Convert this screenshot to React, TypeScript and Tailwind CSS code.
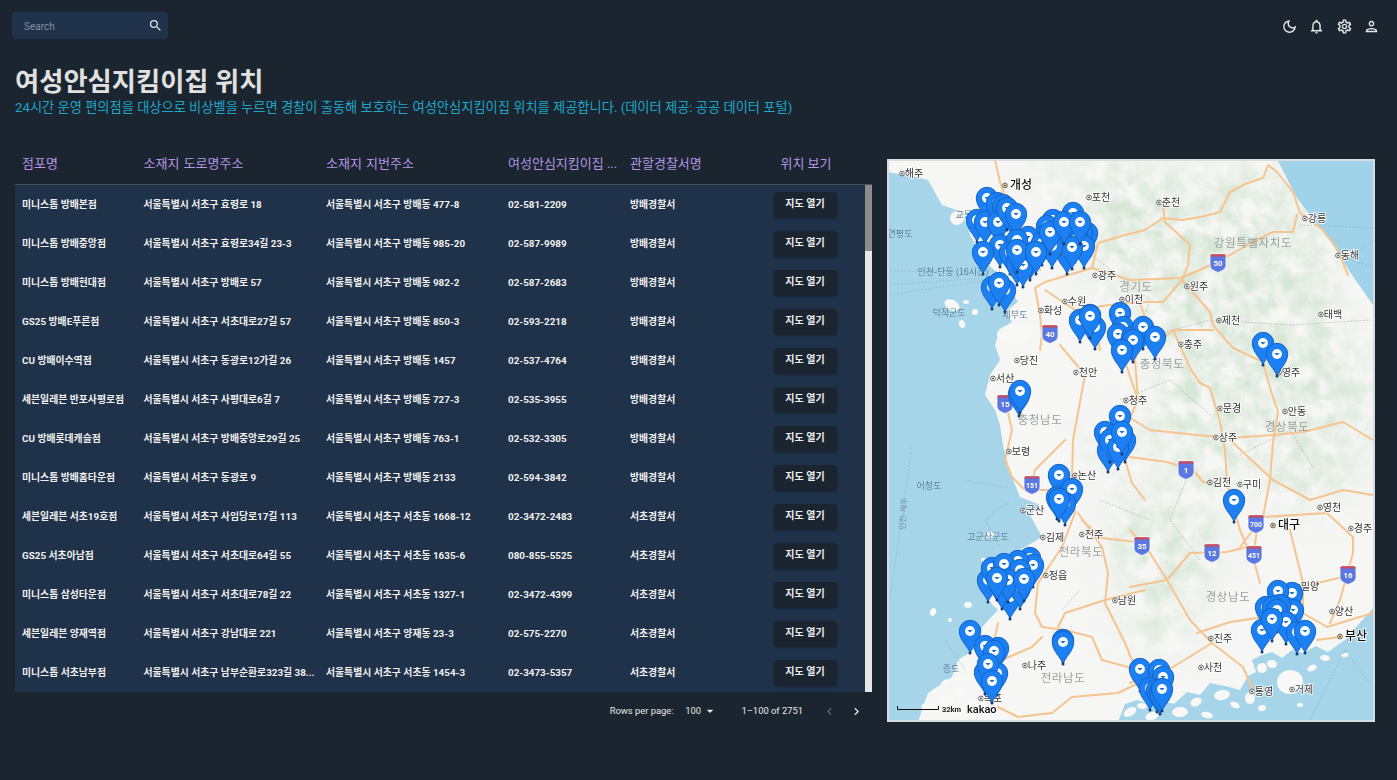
import React from "react";
import {
  MdSearch,
  MdOutlineDarkMode,
  MdOutlineNotifications,
  MdOutlineSettings,
  MdOutlinePerson,
  MdChevronLeft,
  MdChevronRight,
  MdArrowDropDown,
} from "react-icons/md";

const rows = [
  ["미니스톱 방배본점", "서울특별시 서초구 효령로 18", "서울특별시 서초구 방배동 477-8", "02-581-2209", "방배경찰서"],
  ["미니스톱 방배중앙점", "서울특별시 서초구 효령로34길 23-3", "서울특별시 서초구 방배동 985-20", "02-587-9989", "방배경찰서"],
  ["미니스톱 방배현대점", "서울특별시 서초구 방배로 57", "서울특별시 서초구 방배동 982-2", "02-587-2683", "방배경찰서"],
  ["GS25 방배E푸른점", "서울특별시 서초구 서초대로27길 57", "서울특별시 서초구 방배동 850-3", "02-593-2218", "방배경찰서"],
  ["CU 방배이수역점", "서울특별시 서초구 동광로12가길 26", "서울특별시 서초구 방배동 1457", "02-537-4764", "방배경찰서"],
  ["세븐일레븐 반포사평로점", "서울특별시 서초구 사평대로6길 7", "서울특별시 서초구 방배동 727-3", "02-535-3955", "방배경찰서"],
  ["CU 방배롯데캐슬점", "서울특별시 서초구 방배중앙로29길 25", "서울특별시 서초구 방배동 763-1", "02-532-3305", "방배경찰서"],
  ["미니스톱 방배홈타운점", "서울특별시 서초구 동광로 9", "서울특별시 서초구 방배동 2133", "02-594-3842", "방배경찰서"],
  ["세븐일레븐 서초19호점", "서울특별시 서초구 사임당로17길 113", "서울특별시 서초구 서초동 1668-12", "02-3472-2483", "서초경찰서"],
  ["GS25 서초아남점", "서울특별시 서초구 서초대로64길 55", "서울특별시 서초구 서초동 1635-6", "080-855-5525", "서초경찰서"],
  ["미니스톱 삼성타운점", "서울특별시 서초구 서초대로78길 22", "서울특별시 서초구 서초동 1327-1", "02-3472-4399", "서초경찰서"],
  ["세븐일레븐 양재역점", "서울특별시 서초구 강남대로 221", "서울특별시 서초구 양재동 23-3", "02-575-2270", "서초경찰서"],
  ["미니스톱 서초남부점", "서울특별시 서초구 남부순환로323길 38...", "서울특별시 서초구 서초동 1454-3", "02-3473-5357", "서초경찰서"],
];

const roads = [
  "995,160 1000,182 1008,205 1040,270",
  "1045,282 1035,288 1040,315 1042,335 1040,350",
  "1092,268 1098,243 1125,235 1145,230 1163,218 1183,220 1205,216 1220,212 1230,192 1245,184 1263,178 1268,165 1277,172 1293,192 1300,213 1323,230 1337,248 1348,275",
  "1163,205 1165,222 1190,245 1188,265 1182,280 1210,312 1213,325 1233,348 1263,362 1270,388 1278,412 1273,442 1270,480 1263,517 1240,547",
  "1130,280 1180,278 1200,270 1230,255 1247,245 1273,232 1293,232 1297,215",
  "1155,345 1173,330 1213,330",
  "1173,330 1190,368 1200,383 1210,388 1220,422 1225,450",
  "1130,418 1150,430 1197,435 1230,438 1273,435 1303,432 1343,422 1373,440",
  "1143,302 1163,302 1182,280",
  "1140,302 1145,318",
  "1045,282 1092,268 1130,280",
  "1045,290 1075,310 1110,305 1140,302",
  "1005,460 1012,477 1025,490 1048,490",
  "1065,440 1035,470 1030,492",
  "1073,440 1072,480 1075,513 1062,547 1038,583 1035,613 1042,627 1065,630 1092,637 1102,660 1128,667 1145,683",
  "1078,513 1102,547 1108,573 1105,603 1125,643 1132,660",
  "1145,590 1105,600 1065,613 1058,627",
  "998,623 995,637",
  "1002,660 1032,647 1042,637",
  "998,707 1018,717 1052,713 1072,697 1118,693 1145,680",
  "1082,520 1102,538 1145,543",
  "1125,460 1132,483 1145,500",
  "1130,457 1167,462 1193,470 1203,482 1227,483 1225,450",
  "1227,483 1240,530 1247,547 1227,552 1190,553 1167,580 1150,553 1130,530",
  "1167,580 1130,587",
  "1167,580 1190,620 1212,643 1243,667 1253,690",
  "1212,643 1173,667 1130,683",
  "1197,633 1230,622 1257,618 1300,620",
  "1257,530 1253,557 1260,583",
  "1230,440 1273,480 1310,500 1343,490 1373,495",
  "1263,517 1327,513 1353,537 1353,553 1340,600 1330,623",
  "1290,530 1303,583 1303,613 1327,627 1373,613",
  "1300,587 1343,577",
  "1317,640 1340,637",
  "1005,400 1012,430 1005,460",
  "1060,345 1085,375 1073,440",
  "1118,340 1138,400 1130,418",
  "1145,318 1135,360 1138,400",
  "1100,350 1095,327",
];

const regions: [string, number, number][] = [
  ["강원특별자치도", 1253, 247],
  ["경기도", 1136, 291],
  ["충청북도", 1162, 368],
  ["충청남도", 1040, 424],
  ["경상북도", 1287, 431],
  ["전라북도", 1081, 556],
  ["전라남도", 1063, 682],
  ["경상남도", 1228, 601],
];

const cities: [string, number, number, boolean?][] = [
  ["해주", 914, 177],
  ["개성", 1021, 189, true],
  ["포천", 1101, 201],
  ["춘천", 1171, 206],
  ["강릉", 1317, 222],
  ["동해", 1350, 259],
  ["원주", 1199, 290],
  ["제천", 1231, 324],
  ["이천", 1134, 303],
  ["수원", 1077, 305],
  ["화성", 1053, 314],
  ["광주", 1107, 279],
  ["태백", 1333, 318],
  ["충주", 1193, 348],
  ["영주", 1291, 376],
  ["문경", 1232, 412],
  ["안동", 1297, 415],
  ["청주", 1138, 404],
  ["상주", 1228, 441],
  ["천안", 1088, 376],
  ["당진", 1029, 364],
  ["서산", 1005, 382],
  ["보령", 1021, 455],
  ["논산", 1087, 479],
  ["군산", 1035, 514],
  ["김제", 1055, 541],
  ["전주", 1094, 538],
  ["정읍", 1058, 579],
  ["남원", 1127, 604],
  ["나주", 1037, 669],
  ["목포", 993, 702],
  ["김천", 1222, 486],
  ["구미", 1252, 488],
  ["대구", 1289, 529, true],
  ["영천", 1332, 511],
  ["경주", 1363, 532],
  ["밀양", 1310, 590],
  ["양산", 1344, 615],
  ["부산", 1356, 640, true],
  ["진주", 1223, 642],
  ["사천", 1213, 671],
  ["통영", 1264, 695],
  ["거제", 1304, 693],
];

const seaLabels: [string, number, number][] = [
  ["연평도", 900, 237],
  ["교동도", 968, 218],
  ["덕적군도", 949, 316],
  ["제부도", 1015, 318],
  ["인천-단둥 (16시간)", 953, 275],
  ["어청도", 929, 489],
  ["고군산군도", 988, 540],
  ["증도", 951, 672],
];

const shields: [string, number, number][] = [
  ["50", 1218, 262],
  ["40", 1050, 333],
  ["15", 1005, 403],
  ["151", 1032, 484],
  ["1", 1186, 469],
  ["35", 1142, 545],
  ["12", 1212, 552],
  ["451", 1254, 554],
  ["700", 1256, 523],
  ["16", 1348, 574],
];

const islands: [number, number, number, number][] = [
  [1130, 712, 7, 4], [1142, 706, 5, 3], [1152, 716, 7, 4], [1170, 700, 6, 3], [1180, 712, 8, 5], [1196, 702, 6, 4], [1207, 715, 6, 3],
  [1222, 695, 8, 5], [1235, 705, 5, 3], [1250, 698, 5, 6], [1262, 708, 4, 3], [1272, 664, 5, 4], [1290, 682, 13, 12], [1312, 668, 5, 3],
  [1325, 658, 5, 3], [1345, 655, 4, 2], [1262, 668, 5, 5], [1300, 705, 3, 2], [1240, 680, 4, 3],
  [930, 708, 9, 5], [945, 700, 9, 6], [960, 692, 8, 6], [975, 705, 14, 8], [958, 712, 8, 5], [972, 668, 6, 7], [962, 680, 5, 3],
  [945, 682, 4, 2], [936, 692, 4, 3], [985, 688, 4, 3], [933, 612, 3, 4], [968, 605, 4, 3], [950, 620, 2, 2],
  [984, 250, 7, 6], [957, 218, 7, 7], [952, 305, 8, 5], [966, 302, 3, 2], [962, 324, 3, 4], [975, 312, 3, 3], [1015, 334, 18, 10], [990, 535, 4, 3],
  [985, 560, 4, 2],
];

const pins: [number, number][] = [
  [987, 198], [997, 203], [1003, 205], [977, 220], [985, 222], [998, 222], [1011, 212], [1007, 208], [1016, 214],
  [1073, 213], [1053, 220], [1047, 226], [1087, 233], [1082, 232], [1077, 230], [1068, 232], [1043, 237], [1028, 237],
  [1000, 245], [1017, 240], [1010, 252], [1030, 258], [1042, 243], [1067, 252], [1075, 240], [1084, 246], [1060, 232], [1072, 247], [1052, 246],
  [983, 252], [1017, 263], [1023, 265], [1017, 250], [1036, 252], [1050, 232], [1064, 222], [1080, 222],
  [992, 287], [1005, 290], [999, 283],
  [1090, 315], [1080, 320], [1095, 327], [1090, 316],
  [1120, 313], [1123, 327], [1118, 334], [1132, 337], [1143, 327], [1133, 340], [1122, 350], [1155, 337],
  [1263, 343], [1277, 354],
  [1019, 394], [1020, 391],
  [1120, 416], [1105, 432], [1108, 450], [1115, 435], [1125, 440], [1110, 440], [1118, 447], [1122, 432],
  [1059, 475], [1072, 489], [1065, 503], [1057, 497], [1059, 499],
  [1010, 597], [1002, 587], [1020, 587], [988, 580], [992, 568], [1030, 558], [1033, 565], [1018, 561], [1004, 564], [1020, 570], [1008, 580], [997, 578], [1024, 579],
  [970, 631], [998, 648], [985, 646], [994, 651], [997, 673], [985, 672], [988, 664], [992, 681],
  [1063, 640], [1063, 642],
  [1140, 669], [1159, 670], [1163, 677], [1150, 688], [1157, 690], [1160, 692], [1162, 689],
  [1234, 500],
  [1292, 593], [1278, 591], [1293, 610], [1280, 605], [1262, 630], [1266, 607], [1273, 607], [1277, 610], [1286, 622], [1297, 632], [1272, 619], [1305, 631],
];

function MapView() {
  return (
    <svg viewBox="887 159 488 563" width="488" height="563" className="block h-full w-full">
      <defs>
        <filter id="noise" x="0" y="0" width="100%" height="100%">
          <feTurbulence type="fractalNoise" baseFrequency="0.055" numOctaves="4" seed="7" />
          <feColorMatrix
            type="matrix"
            values="0 0 0 0 0.66  0 0 0 0 0.79  0 0 0 0 0.66  1.6 1.6 0 0 -1.15"
          />
        </filter>
        <filter id="soft">
          <feGaussianBlur stdDeviation="22" />
        </filter>
        <filter id="tiny">
          <feGaussianBlur stdDeviation="0.3" />
        </filter>
        <mask id="mountains">
          <g filter="url(#soft)" fill="#fff">
            <ellipse cx="1240" cy="290" rx="95" ry="120" />
            <ellipse cx="1150" cy="240" rx="70" ry="70" />
            <ellipse cx="1110" cy="450" rx="20" ry="20" />
            <ellipse cx="1210" cy="420" rx="60" ry="60" />
            <ellipse cx="1330" cy="400" rx="40" ry="70" />
            <ellipse cx="1165" cy="540" rx="55" ry="55" />
            <ellipse cx="1310" cy="470" rx="50" ry="30" />
            <ellipse cx="1090" cy="175" rx="50" ry="20" />
            <ellipse cx="1160" cy="620" rx="30" ry="30" />
          </g>
        </mask>
        <symbol id="pin" overflow="visible">
          <path
            d="M0 22C-2 15-10.7 9.5-10.7 0A10.7 10.7 0 1 1 10.7 0C10.7 9.5 2 15 0 22Z"
            fill="#1a7ff2"
            stroke="#1564c8"
            strokeWidth="1"
          />
          <circle cx="0" cy="0" r="4.9" fill="#fff" />
          <path d="M-2.7-1H2.7L0 1.4Z" fill="#1a70d8" />
          <circle cx="0" cy="22" r="1.5" fill="#133a70" />
        </symbol>
      </defs>

      <g filter="url(#tiny)">
        <rect x="887" y="159" width="488" height="563" fill="#f6f6f4" />
        <rect x="887" y="159" width="488" height="563" filter="url(#noise)" mask="url(#mountains)" />

        <path
          d="M887 172 912 176 928 180 942 205 962 212 970 235 985 262 1003 278 1012 292 1018 302 1005 312 1012 322 1000 330 995 345 1000 360 990 375 985 395 995 410 1000 425 1003 445 1008 465 1015 485 1020 497 1040 505 1030 515 1042 537 1015 553 998 567 985 597 998 610 982 627 978 647 958 660 952 677 928 693 918 722 887 722Z"
          fill="#a6d5ea"
        />
        <path d="M1277 159 1297 198 1310 215 1333 245 1350 272 1373 305 1375 159Z" fill="#a0d2ea" />
        <path
          d="M1118 722 1125 704 1137 700 1150 704 1165 697 1175 703 1187 692 1200 695 1210 683 1225 686 1240 690 1248 676 1256 672 1252 660 1262 655 1272 652 1282 658 1292 650 1303 653 1316 646 1328 652 1345 640 1358 625 1375 606 1375 722Z"
          fill="#a6d5ea"
        />
        <g fill="#f8f8f6">
          {islands.map(([x, y, a, b], i) => (
            <ellipse key={i} cx={x} cy={y} rx={a} ry={b} transform={`rotate(${(i * 37) % 60 - 30} ${x} ${y})`} />
          ))}
        </g>

        <path d="M887 271H1000M887 285 985 278M887 295 990 280" stroke="#7fa9bd" strokeWidth="0.6" strokeDasharray="1.5 2" fill="none" />
        <path d="M912 445 890 600M965 480 1010 488M1000 545 985 520 1010 500M945 640 965 670M1300 225 1375 228M1345 258 1375 268M1345 260 1375 240M1310 720 1345 650 1375 690" stroke="#7fa9bd" strokeWidth="0.6" strokeDasharray="1.5 2" fill="none" />

        <path d="M1190 470 1170 520 1200 560M1085 250 1150 300 1135 340 1210 320 1290 325 1370 320M1120 400 1170 380 1210 415M1240 455 1290 430 1315 470M1100 500 1150 520M1062 610 1080 590" stroke="#a9b0a5" strokeWidth="0.6" strokeDasharray="2 1.2" fill="none" />

        <g fill="none" stroke="#f6c48f" strokeWidth="2" strokeLinejoin="round" strokeLinecap="round">
          {roads.map((r, i) => (
            <polyline key={i} points={r} />
          ))}
        </g>

        {shields.map(([t, x, y]) => (
          <g key={t} transform={`translate(${x} ${y})`}>
            <path d="M-8-6C-8-7-7-8-6-8H6C7-8 8-7 8-6V3C8 8 3 9 0 10.5-3 9-8 8-8 3Z" fill="#5a78e0" stroke="#fff" strokeWidth="0.8" />
            <path d="M-7.6-5.6C-7.6-7-7-7.7-6-7.7H6C7-7.7 7.6-7 7.6-5.6Z" fill="#cf4b57" />
            <text x="0" y="4" textAnchor="middle" fontSize={t.length > 2 ? 7 : 8} fontWeight="700" fill="#fff" fontFamily="Roboto, sans-serif">
              {t}
            </text>
          </g>
        ))}

        <g fontFamily="'Noto Sans CJK KR', sans-serif">
          {regions.map(([t, x, y]) => (
            <text key={t} x={x} y={y} textAnchor="middle" fontSize="11.5" fill="#9a9f9c" letterSpacing="0.6">
              {t}
            </text>
          ))}
          {seaLabels.map(([t, x, y]) => (
            <text key={t} x={x} y={y} textAnchor="middle" fontSize="9" fill="#5e7f91">
              {t}
            </text>
          ))}
          <text transform="translate(905 530) rotate(-86)" fontSize="8" fill="#6f93a5">
            인천-제주
          </text>
          {cities.map(([t, x, y, big]) => (
            <g key={t}>
              <circle cx={x - (big ? 16 : 12)} cy={y - 3.5} r="2.4" fill={big ? "#f6e7a8" : "#fff"} stroke="#444" strokeWidth="0.8" />
              <circle cx={x - (big ? 16 : 12)} cy={y - 3.5} r="0.9" fill="#444" />
              <text
                x={x}
                y={y}
                textAnchor="middle"
                fontSize={big ? 12 : 10}
                fill={big ? "#111" : "#333"}
                fontWeight={big ? 500 : 400}
                stroke="#fff"
                strokeWidth="1.6"
                paintOrder="stroke"
              >
                {t}
              </text>
            </g>
          ))}
        </g>

        {pins.map(([x, y], i) => (
          <use key={i} href="#pin" x={x} y={y} />
        ))}

        <path d="M897.5 706V709.5H938.5V706" fill="none" stroke="#111" strokeWidth="1" />
        <text x="942" y="712" fontSize="7.5" fontWeight="700" fill="#222" fontFamily="Roboto, sans-serif">
          32km
        </text>
        <text x="967" y="713" fontSize="11" fontWeight="500" fill="#111" fontFamily="Roboto, sans-serif">
          kakao
        </text>
      </g>
    </svg>
  );
}

export default function App() {
  return (
    <div className="h-[780px] w-[1397px] overflow-hidden bg-[#1a2530] font-['Roboto','Noto_Sans_CJK_KR',sans-serif] text-white">
      <header className="flex h-[39px] items-end justify-between pl-3 pr-[17px]">
        <div className="flex h-[27px] w-[156px] items-center justify-between rounded-[3px] bg-[#1f3249] pl-3 pr-[6px]">
          <span className="mt-[1px] text-[10px] text-[#84909c]">Search</span>
          <MdSearch className="mr-[-1px] text-[#e0e0e0]" size={15} />
        </div>
        <div className="mb-[4px] flex items-center gap-[10.5px] text-[#e8e8e8]">
          <MdOutlineDarkMode size={17} />
          <MdOutlineNotifications size={17} />
          <MdOutlineSettings size={17} />
          <MdOutlinePerson size={17} />
        </div>
      </header>

      <div className="pl-[15px] pt-[27px]">
        <h1 className="text-[26.3px] font-bold leading-[32px] text-[#e0e0e0]">여성안심지킴이집 위치</h1>
        <p className="text-[13.24px] leading-[19px] text-[#1fa6c9]">
          24시간 운영 편의점을 대상으로 비상벨을 누르면 경찰이 출동해 보호하는 여성안심지킴이집 위치를 제공합니다. (데이터 제공: 공공 데이터 포털)
        </p>
      </div>

      <main className="mt-[26px] flex items-start pl-[15px]">
        <section className="w-[857px]">
          <div className="flex h-[42px] items-center border-b border-[#4a525c] text-[13px] text-[#b395e3]">
            <span className="w-[121.5px] pl-[7px]">점포명</span>
            <span className="w-[182.5px] pl-[7px] [word-spacing:1px]">소재지 도로명주소</span>
            <span className="w-[182px] pl-[7px] [word-spacing:1px]">소재지 지번주소</span>
            <span className="w-[122px] truncate pl-[7px]">여성안심지킴이집 ...</span>
            <span className="w-[122px] pl-[7px]">관할경찰서명</span>
            <span className="w-[122px] text-center">위치 보기</span>
          </div>
          <div className="flex h-[507px] overflow-hidden bg-[#1f3249]">
            <div className="flex-1">
              {rows.map((r) => (
                <div key={r[0]} className="flex h-[39px] items-center text-[9.85px] font-bold text-[#f0f0f0]">
                  <span className="mt-[1px] w-[121.5px] truncate px-[7px]">{r[0]}</span>
                  <span className="mt-[1px] w-[182.5px] truncate pl-[7px]">{r[1]}</span>
                  <span className="mt-[1px] w-[182px] truncate px-[7px]">{r[2]}</span>
                  <span className="mt-[1px] w-[122px] truncate px-[7px]">{r[3]}</span>
                  <span className="mt-[1px] w-[122px] truncate px-[7px]">{r[4]}</span>
                  <span className="flex w-[120px] justify-center">
                    <button className="h-[26px] w-[63px] rounded-[4px] bg-[#1a2530] pb-[2px] text-[10px] font-bold text-[#f0f0f0] shadow-[0_1px_2px_rgba(0,0,0,0.25)]">
                      지도 열기
                    </button>
                  </span>
                </div>
              ))}
            </div>
            <div className="w-[7px] bg-[#e6e6e6]">
              <div className="h-[66px] bg-[#8c8c8c]" />
            </div>
          </div>
          <div className="flex h-[38px] items-center justify-end pr-[8px] text-[9.4px] text-[#e8e8e8]">
            <span>Rows per page:</span>
            <span className="ml-[11.5px]">100</span>
            <MdArrowDropDown className="ml-[1px]" size={16} />
            <span className="ml-[23.5px]">1–100 of 2751</span>
            <MdChevronLeft className="ml-[19px] text-[#5f6872]" size={15} />
            <MdChevronRight className="ml-[12px]" size={15} />
          </div>
        </section>
        <aside className="ml-[15px] mt-[16px] h-[563px] w-[488px] overflow-hidden outline-2 -outline-offset-2 outline-[#d8dcdf]">
          <MapView />
        </aside>
      </main>
    </div>
  );
}
